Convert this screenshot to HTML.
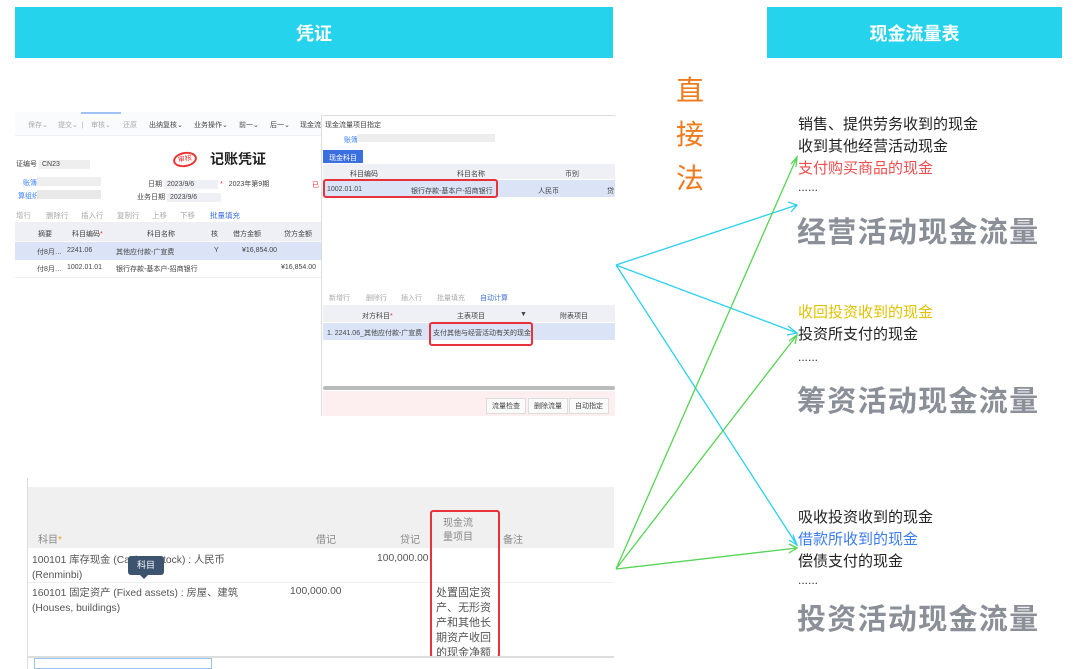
<!DOCTYPE html>
<html><head><meta charset="utf-8"><style>
*{margin:0;padding:0;box-sizing:border-box}
body{width:1080px;height:669px;background:#fff;position:relative;overflow:hidden;font-family:"Liberation Sans","Noto Sans CJK SC",sans-serif;color:#333}
.a{position:absolute;white-space:nowrap}
.bar{position:absolute;top:7px;height:51px;background:#25d3ec;color:#fff;font-weight:bold;font-size:18px;display:flex;align-items:center;justify-content:center}
.s{position:absolute;white-space:nowrap;font-size:7px;color:#444}
.g{color:#aaa}
.rt{font-size:15px;color:#222}
.big{font-size:29px;font-weight:bold;color:#8a8f98;letter-spacing:1.3px}
.red{border:2px solid #e8323c;border-radius:3px;position:absolute}
.h{font-size:10px;color:#888}
</style></head><body>
<div class="bar" style="left:15px;width:598px">凭证</div>
<div class="bar" style="left:767px;width:295px">现金流量表</div>

<!-- top screenshot -->
<div class="a" style="left:15px;top:112px;width:306px;height:24px;background:#fafbfd;border-bottom:1px solid #eef0f4"></div>
<div class="a" style="left:81px;top:112px;width:40px;height:2px;background:#9fc3f5"></div>
<div class="s g" style="left:28px;top:120px">保存⌄</div>
<div class="s g" style="left:58px;top:120px">提交⌄ &nbsp;|</div>
<div class="s g" style="left:91px;top:120px">审核⌄</div>
<div class="s g" style="left:123px;top:120px">还原</div>
<div class="s" style="left:149px;top:120px">出纳复核⌄</div>
<div class="s" style="left:194px;top:120px">业务操作⌄</div>
<div class="s" style="left:239px;top:120px">前一⌄</div>
<div class="s" style="left:270px;top:120px">后一⌄</div>
<div class="s" style="left:300px;top:120px">现金流</div>
<div class="s" style="left:16px;top:159px">证编号 <span style="background:#eee;padding:1px 30px 1px 3px">CN23</span></div>
<div class="a" style="left:173px;top:152px;width:24px;height:15px;border:2px solid #e33;border-radius:50%;color:#e33;font-size:7px;text-align:center;line-height:11px;transform:rotate(-10deg)">审核</div>
<div class="a" style="left:210px;top:149px;font-size:14px;font-weight:bold;color:#222">记账凭证</div>
<div class="s" style="left:23px;top:178px;color:#3b82f6">账簿</div>
<div class="a" style="left:37px;top:177px;width:64px;height:9px;background:#eee"></div>
<div class="s" style="left:18px;top:191px;color:#3b82f6">算组织</div>
<div class="a" style="left:37px;top:190px;width:64px;height:9px;background:#e8e8e8"></div>
<div class="s" style="left:148px;top:179px">日期 <span style="background:#eef0f6;padding:1px 24px 1px 3px">2023/9/6</span> <span style="color:#e33">*</span> &nbsp;&nbsp;2023年第9期</div>
<div class="s" style="left:137px;top:192px">业务日期 <span style="background:#eef0f6;padding:1px 24px 1px 3px">2023/9/6</span></div>
<div class="s" style="left:312px;top:180px;color:#e33">已</div>
<div class="s g" style="left:16px;top:210px;font-size:7.5px">增行</div>
<div class="s g" style="left:46px;top:210px;font-size:7.5px">删除行</div>
<div class="s g" style="left:81px;top:210px;font-size:7.5px">插入行</div>
<div class="s g" style="left:117px;top:210px;font-size:7.5px">复制行</div>
<div class="s g" style="left:152px;top:210px;font-size:7.5px">上移</div>
<div class="s g" style="left:180px;top:210px;font-size:7.5px">下移</div>
<div class="s" style="left:210px;top:210px;font-size:7.5px;color:#3b6fe0">批量填充</div>
<div class="a" style="left:15px;top:222px;width:306px;height:19px;background:#eef0f5"></div>
<div class="s" style="left:38px;top:229px">摘要</div>
<div class="s" style="left:72px;top:229px">科目编码<span style="color:#e33">*</span></div>
<div class="s" style="left:147px;top:229px">科目名称</div>
<div class="s" style="left:211px;top:229px">核</div>
<div class="s" style="left:233px;top:229px">借方金额</div>
<div class="s" style="left:284px;top:229px">贷方金额</div>
<div class="a" style="left:15px;top:242px;width:306px;height:18px;background:#dbe4f7"></div>
<div class="s" style="left:37px;top:247px">付8月…</div>
<div class="s" style="left:67px;top:247px">2241.06</div>
<div class="s" style="left:116px;top:247px">其他应付款-广宣费</div>
<div class="s" style="left:214px;top:247px">Y</div>
<div class="s" style="left:242px;top:247px">¥16,854.00</div>
<div class="s" style="left:37px;top:264px">付8月…</div>
<div class="s" style="left:67px;top:264px">1002.01.01</div>
<div class="s" style="left:116px;top:264px">银行存款-基本户-招商银行</div>
<div class="s" style="left:281px;top:264px">¥16,854.00</div>
<div class="a" style="left:15px;top:277px;width:306px;height:1px;background:#eee"></div>

<!-- dialog -->
<div class="a" style="left:321px;top:115px;width:294px;height:301px;background:#fff;border-left:1px solid #ddd;border-top:1px solid #ddd"></div>
<div class="s" style="left:325px;top:120px">现金流量项目指定</div>
<div class="s" style="left:344px;top:135px;color:#3b82f6">账簿</div>
<div class="a" style="left:357px;top:134px;width:138px;height:8px;background:#eee"></div>
<div class="s" style="left:323px;top:150px;width:40px;height:13px;background:#3b6fe0;color:#fff;padding:3px 0 0 6px">现金科目</div>
<div class="a" style="left:323px;top:164px;width:292px;height:15px;background:#eef0f5"></div>
<div class="s" style="left:350px;top:169px">科目编码</div>
<div class="s" style="left:457px;top:169px">科目名称</div>
<div class="s" style="left:565px;top:169px">币别</div>
<div class="a" style="left:323px;top:180px;width:292px;height:17px;background:#dbe4f7"></div>
<div class="s" style="left:327px;top:186px">1002.01.01</div>
<div class="s" style="left:411px;top:186px">银行存款-基本户-招商银行</div>
<div class="s" style="left:538px;top:186px">人民币</div>
<div class="s" style="left:607px;top:186px">贷</div>
<div class="red" style="left:323px;top:179px;width:175px;height:19px"></div>
<div class="s g" style="left:329px;top:293px">新增行</div>
<div class="s g" style="left:366px;top:293px">删除行</div>
<div class="s g" style="left:401px;top:293px">插入行</div>
<div class="s g" style="left:437px;top:293px">批量填充</div>
<div class="s" style="left:480px;top:293px;color:#3b6fe0">自动计算</div>
<div class="a" style="left:323px;top:305px;width:292px;height:17px;background:#eef0f5"></div>
<div class="s" style="left:362px;top:311px">对方科目<span style="color:#e33">*</span></div>
<div class="s" style="left:457px;top:311px">主表项目</div>
<div class="s" style="left:520px;top:311px">▼</div>
<div class="s" style="left:560px;top:311px">附表项目</div>
<div class="a" style="left:323px;top:323px;width:292px;height:17px;background:#dbe4f7"></div>
<div class="s" style="left:327px;top:328px">1. 2241.06_其他应付款-广宣费</div>
<div class="s" style="left:433px;top:328px">支付其他与经营活动有关的现金</div>
<div class="red" style="left:429px;top:322px;width:104px;height:24px"></div>
<div class="a" style="left:323px;top:386px;width:292px;height:4px;background:#bbb;border-radius:2px"></div>
<div class="a" style="left:323px;top:391px;width:292px;height:25px;background:#fdeef0"></div>
<div class="s" style="left:486px;top:398px;border:1px solid #ddd;background:#fafafa;padding:2px 5px">流量检查</div>
<div class="s" style="left:528px;top:398px;border:1px solid #ddd;background:#fafafa;padding:2px 5px">删除流量</div>
<div class="s" style="left:569px;top:398px;border:1px solid #ddd;background:#fafafa;padding:2px 5px">自动指定</div>

<!-- bottom screenshot -->
<div class="a" style="left:27px;top:478px;width:587px;height:191px;background:#fff;border-left:1px solid #ddd"></div>
<div class="a" style="left:28px;top:487px;width:586px;height:61px;background:#f0f0f0"></div>
<div class="a h" style="left:38px;top:531px">科目<span style="color:#f0a020">*</span></div>
<div class="a h" style="left:316px;top:531px">借记</div>
<div class="a h" style="left:400px;top:531px">贷记</div>
<div class="a h" style="left:443px;top:517px;line-height:14px">现金流<br>量项目</div>
<div class="a h" style="left:503px;top:531px">备注</div>
<div class="a" style="left:32px;top:553px;font-size:10.3px;color:#555;line-height:15px">100101 库存现金 (Cash on stock) : 人民币<br>(Renminbi)</div>
<div class="a" style="left:377px;top:553px;font-size:10.3px;color:#555">100,000.00</div>
<div class="a" style="left:128px;top:556px;width:36px;height:19px;background:#3d5470;color:#fff;font-size:9px;text-align:center;line-height:19px;border-radius:3px">科目</div>
<div class="a" style="left:140px;top:575px;width:0;height:0;border:4px solid transparent;border-top-color:#3d5470"></div>
<div class="a" style="left:28px;top:582px;width:586px;height:1px;background:#eee"></div>
<div class="a" style="left:32px;top:586px;font-size:10.3px;color:#555;line-height:15px">160101 固定资产 (Fixed assets) : 房屋、建筑<br>(Houses, buildings)</div>
<div class="a" style="left:290px;top:586px;font-size:10.3px;color:#555">100,000.00</div>
<div class="a" style="left:436px;top:586px;font-size:11px;color:#555;line-height:15px;white-space:normal;width:58px;word-break:break-all">处置固定资产、无形资产和其他长期资产收回的现金净额</div>
<div class="red" style="left:430px;top:510px;width:70px;height:148px"></div>
<div class="a" style="left:28px;top:656px;width:586px;height:2px;background:#ddd"></div>
<div class="a" style="left:34px;top:658px;width:178px;height:11px;border:1px solid #9cc3ee"></div>

<!-- 直接法 -->
<div class="a" style="left:676px;top:69px;font-size:28px;color:#f07a1e;line-height:44px;white-space:normal;width:32px">直接法</div>

<!-- right -->
<div class="a rt" style="left:798px;top:114px;line-height:22px">销售、提供劳务收到的现金<br>收到其他经营活动现金<br><span style="color:#f04e4e">支付购买商品的现金</span></div>
<div class="a" style="left:798px;top:180px;font-size:12px;color:#333">......</div>
<div class="a big" style="left:797px;top:209px">经营活动现金流量</div>
<div class="a rt" style="left:798px;top:302px;line-height:22px"><span style="color:#e0c200">收回投资收到的现金</span><br>投资所支付的现金</div>
<div class="a" style="left:798px;top:350px;font-size:12px;color:#333">......</div>
<div class="a big" style="left:797px;top:378px">筹资活动现金流量</div>
<div class="a rt" style="left:798px;top:507px;line-height:22px">吸收投资收到的现金<br><span style="color:#3b7cf0">借款所收到的现金</span><br>偿债支付的现金</div>
<div class="a" style="left:798px;top:573px;font-size:12px;color:#333">......</div>
<div class="a big" style="left:797px;top:596px">投资活动现金流量</div>

<svg class="a" style="left:0;top:0" width="1080" height="669" fill="none" stroke-width="1.3">
<g stroke="#2ad0ec">
<path d="M616 265L797 205M616 265L797 333M616 265L797 545"/>
<path d="M788 202L797 205L791 212M788 326L797 333L787 335M793 535L797 545L789 540"/>
</g>
<g stroke="#55d455">
<path d="M616 569L797 157M616 569L797 335M616 569L797 548"/>
<path d="M791 164L797 157L796 167M789 341L797 335L795 344M789 544L797 548L789 553"/>
</g>
</svg>
</body></html>
